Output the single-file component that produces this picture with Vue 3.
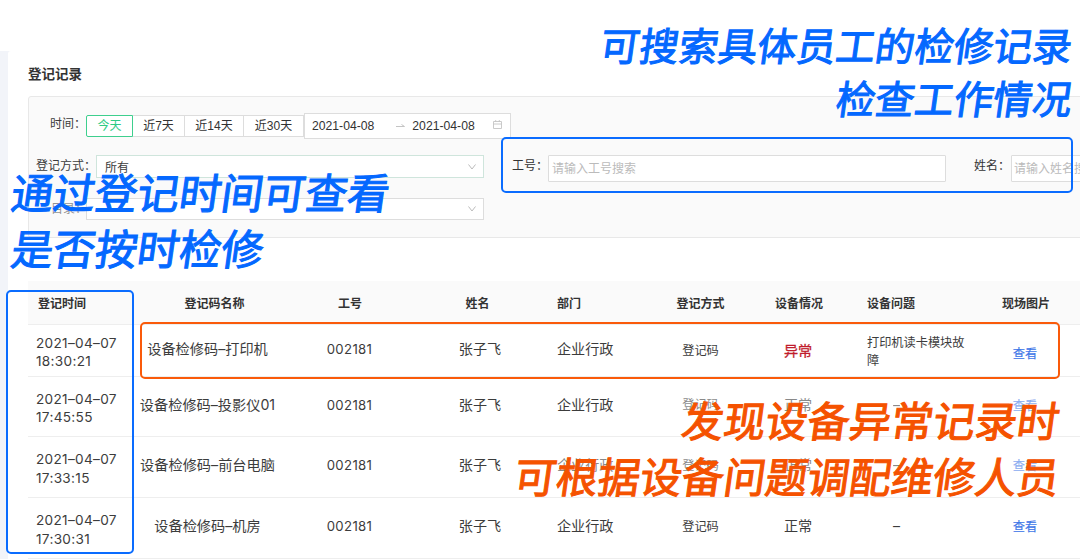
<script setup>
import { ref } from 'vue'

const ranges = ['今天', '近7天', '近14天', '近30天']
const activeRange = ref('今天')

const method = ref('所有')
const startDate = ref('2021-04-08')
const endDate = ref('2021-04-08')

const headers = ['登记时间', '登记码名称', '工号', '姓名', '部门', '登记方式', '设备情况', '设备问题', '现场图片']
const columns = ['time', 'code', 'number', 'person', 'dept', 'method', 'status', 'problem', 'photo']

// faded lists the cells that sit under the notes
const records = [
  { time: '18:30:21', code: '设备检修码–打印机', status: '异常', problem: '打印机读卡模块故障', faded: [] },
  { time: '17:45:55', code: '设备检修码–投影仪01', status: '正常', problem: '–', faded: ['method', 'status', 'problem', 'photo'] },
  { time: '17:33:15', code: '设备检修码–前台电脑', status: '正常', problem: '–', faded: ['dept', 'method', 'status', 'problem', 'photo'] },
  { time: '17:30:31', code: '设备检修码–机房', status: '正常', problem: '–', faded: [] },
]

const cellClass = (record, name) => [name, { faded: record.faded.includes(name) }]
</script>

<template>
  <div class="page">
    <div class="panel">
      <h1 class="title">登记记录</h1>

      <!-- Filters -->
      <div class="filters">
        <div class="filter-row first">
          <label class="label time-label">时间：</label>
          <div class="ranges">
            <button v-for="range in ranges" :key="range" :class="{ active: range === activeRange }" @click="activeRange = range">{{ range }}</button>
          </div>
          <div class="date-picker">
            <span class="date">{{ startDate }}</span>
            <svg class="arrow" width="9" height="6" viewBox="0 0 9 6"><path d="M0 3.5h8.5L5.5 1.5" fill="none" stroke="#c4c4c4" /></svg>
            <span class="date">{{ endDate }}</span>
            <svg class="calendar" width="9" height="9" viewBox="0 0 9 9"><path d="M.5 1.5h8v7h-8zM.5 4h8M2.7 0v2M6.3 0v2" fill="none" stroke="#c4c4c4" stroke-width=".9" /></svg>
          </div>
        </div>

        <div class="filter-row second">
          <label class="label method-label">登记方式：</label>
          <div class="select focused">
            <span>{{ method }}</span>
            <svg width="8" height="6" viewBox="0 0 8 6"><path d="M.5 .5L4 5L7.5 .5" fill="none" stroke="#bbb" /></svg>
          </div>
          <label class="label number-label">工号：</label>
          <div class="input number-input">请输入工号搜索</div>
          <label class="label name-label">姓名：</label>
          <div class="input name-input">请输入姓名搜索</div>
        </div>

        <div class="filter-row third">
          <label class="label folder-label">目录：</label>
          <div class="select">
            <span></span>
            <svg width="8" height="6" viewBox="0 0 8 6"><path d="M.5 .5L4 5L7.5 .5" fill="none" stroke="#bbb" /></svg>
          </div>
        </div>
      </div>

      <!-- Records -->
      <div class="table">
        <div class="row head">
          <div v-for="(header, index) in headers" :key="header" :class="columns[index]">{{ header }}</div>
        </div>
        <div v-for="record in records" :key="record.time" class="row record">
          <div class="time">2021–04–07<br>{{ record.time }}</div>
          <div class="code">{{ record.code }}</div>
          <div class="number">002181</div>
          <div class="person">张子飞</div>
          <div :class="cellClass(record, 'dept')">企业行政</div>
          <div :class="cellClass(record, 'method')">登记码</div>
          <div :class="[cellClass(record, 'status'), { error: record.status === '异常' }]">{{ record.status }}</div>
          <div :class="[cellClass(record, 'problem'), { empty: record.problem === '–' }]"><span>{{ record.problem }}</span></div>
          <div :class="cellClass(record, 'photo')"><a>查看</a></div>
        </div>
      </div>
    </div>

    <!-- Frames and notes over the page -->
    <div class="frame search-frame"></div>
    <div class="frame time-frame"></div>
    <div class="frame error-frame"></div>

    <div class="note search-note">
      <p>可搜索具体员工的检修记录</p>
      <p>检查工作情况</p>
    </div>
    <div class="note time-note">
      <p>通过登记时间可查看</p>
      <p>是否按时检修</p>
    </div>
    <div class="note error-note">
      <p>发现设备异常记录时</p>
      <p>可根据设备问题调配维修人员</p>
    </div>
  </div>
</template>

<style>
body {
  margin: 0;
  overflow: hidden;
}
</style>

<style scoped>
* {
  box-sizing: border-box;
}

.page {
  position: relative;
  width: 1080px;
  height: 559px;
  padding: 51px 0 0 8px;
  overflow: hidden;
  background: linear-gradient(#fff 51px, #f2f4f9 51px);
  color: #3c3c3c;
  font-family: "Liberation Sans", "Noto Sans CJK SC", sans-serif;
  font-size: 12px;
}

.panel {
  height: 508px;
  padding-left: 20px;
  border-top-left-radius: 3px;
  background: #fff;
  white-space: nowrap;
}

.title {
  height: 45px;
  margin: 0;
  padding-top: 14px;
  color: #333;
  font-size: 13.5px;
  font-weight: 700;
  line-height: 20px;
}

.filters {
  width: 1070px;
  height: 142px;
  border: 1px solid #e8e8e8;
  border-radius: 3px;
  background: #fafafa;
}

.filter-row {
  display: flex;
}

.first {
  height: 58px;
  padding-top: 16px;
}

.second {
  height: 43px;
}

.label {
  flex: none;
  line-height: 22px;
}

.time-label {
  width: 57px;
  padding-left: 21px;
}

.method-label {
  width: 67px;
  padding-left: 7px;
}

.number-label {
  width: 64px;
  padding-left: 28px;
  color: #333;
}

.name-label {
  width: 65px;
  padding-left: 28px;
  color: #333;
}

.folder-label {
  width: 57px;
  padding-left: 22px;
  opacity: .55;
}

.ranges {
  display: flex;
  padding-top: 2px;
}

.ranges button {
  width: 59px;
  height: 22px;
  padding: 0;
  border: 1px solid #ddd;
  border-left: none;
  background: #fff;
  color: #333;
  font: inherit;
  line-height: 21px;
}

.ranges button:nth-child(2) {
  width: 52px;
}

.ranges button:nth-child(4) {
  width: 60px;
}

.ranges .active {
  width: 47px;
  border: 1px solid #3ecf8e;
  border-radius: 2px 0 0 2px;
  color: #2fcb85;
}

.date-picker {
  display: flex;
  align-items: center;
  width: 207px;
  height: 26px;
  padding: 0 8px 0 7px;
  border: 1px solid #ddd;
  background: #fff;
}

.date {
  color: #333;
  font-size: 12.2px;
}

.arrow {
  margin: 0 7px 0 22px;
}

.calendar {
  margin: 0 0 3px auto;
}

.select {
  display: flex;
  flex: none;
  align-items: center;
  justify-content: space-between;
  width: 388px;
  height: 23px;
  padding: 0 7px 0 8px;
  border: 1px solid #ddd;
  background: #fff;
}

.third .select {
  width: 398px;
  height: 22px;
}

.focused {
  border-color: #cfe5dc;
}

.input {
  flex: none;
  height: 27px;
  border: 1px solid #ddd;
  border-radius: 1px;
  background: #fff;
  color: #bbb;
  line-height: 26px;
}

.number-input {
  width: 398px;
  padding-left: 3px;
}

.name-input {
  width: 88px;
  padding-left: 2px;
}

.table {
  width: 1052px;
  margin-top: 43px;
}

.row {
  display: grid;
  grid-template-columns: 105px 150px 134px 126px 107px 101px 96px 128px 102px;
  height: 61px;
  border-bottom: 1px solid #eee;
  text-align: center;
}

.row > div {
  display: flex;
  flex-direction: column;
  justify-content: center;
}

.head {
  height: 44px;
  background: #fafafa;
  color: #333;
  font-size: 12px;
  font-weight: 700;
}

.head .code {
  padding-left: 13px;
}

.head .person {
  padding-right: 5px;
}

.row .time {
  padding-left: 10px;
  text-align: left;
}

.row .dept {
  padding-left: 14px;
  text-align: left;
}

.row .problem {
  padding-left: 20px;
  text-align: left;
}

.record {
  font-family: Inter, "Noto Sans CJK SC", sans-serif;
  font-size: 14.1px;
  line-height: 18px;
}

.record:nth-child(2) {
  height: 52px;
}

.record:nth-child(3) {
  height: 60px;
}

.record > div {
  padding-bottom: 4px;
}

.record:nth-child(2) > div {
  padding-bottom: 3px;
}

.record .time,
.record:nth-child(2) .time {
  padding: 3px 0 0 8px;
  font-size: 13.6px;
  letter-spacing: .32px;
  line-height: 18.5px;
}

.record .code {
  padding-right: 1px;
  font-size: 14.2px;
}

.record .number {
  padding-right: 1px;
  font-size: 13.2px;
  letter-spacing: .35px;
}

.record .method {
  font-size: 12.2px;
  padding-bottom: 3px;
}

.record:nth-child(2) .method,
.record:nth-child(2) .status {
  padding: 1px 0 0;
}

.record .status,
.record:nth-child(2) .status {
  padding-right: 2px;
}

.record .problem {
  padding-right: 8px;
  font-size: 12.2px;
  white-space: normal;
}

.record:nth-child(2) .problem {
  padding: 3px 8px 0 20px;
}

.record .problem span {
  width: 99px;
}

.record .empty span {
  width: 59px;
  font-size: 14px;
  text-align: center;
}

.record .photo {
  padding-right: 2px;
  padding-bottom: 2px;
}

.record:nth-child(2) .photo {
  padding: 6px 2px 0 0;
}

.photo a {
  color: #3f78e8;
  font-size: 12.2px;
  -webkit-text-stroke: .2px #3f78e8;
}

.record .error {
  color: #c01c2c;
  -webkit-text-stroke: .3px #c01c2c;
}

.record .faded {
  opacity: .6;
}

.frame {
  position: absolute;
  border: 2px solid #0a6cff;
  border-radius: 5px;
}

.search-frame {
  top: 137px;
  left: 501px;
  width: 572px;
  height: 56px;
}

.time-frame {
  top: 290px;
  left: 6px;
  width: 128px;
  height: 264px;
}

.error-frame {
  top: 322px;
  left: 140px;
  width: 920px;
  height: 57px;
  border-color: #fa5a0a;
}

.note {
  position: absolute;
  color: #0468ff;
  font-family: "Noto Sans CJK SC", sans-serif;
  font-weight: 400;
  -webkit-text-stroke: 1.1px currentColor;
  white-space: nowrap;
}

.note p {
  margin: 0;
  transform: skewX(-8deg);
}

.search-note {
  top: 17px;
  right: 7px;
  font-size: 39.3px;
  line-height: 53px;
  text-align: right;
}

.time-note {
  top: 163px;
  left: 12px;
  font-size: 42px;
  line-height: 56px;
}

.error-note {
  top: 391px;
  right: 20px;
  color: #f55200;
  font-size: 41.9px;
  line-height: 56px;
  text-align: right;
}
</style>
